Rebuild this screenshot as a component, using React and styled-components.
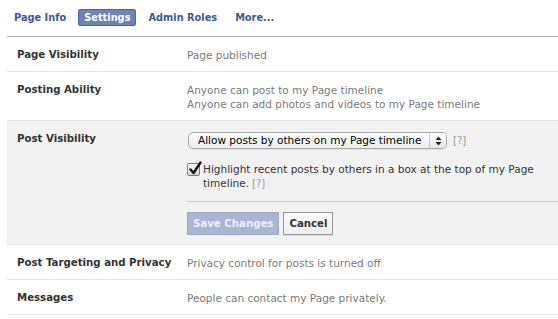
import styled, { createGlobalStyle } from "styled-components";

const GlobalStyle = createGlobalStyle`
    html, body {
        margin: 0;
        padding: 0;
        background: #fff;
    }
    body {
        font-family: "DejaVu Sans", "Liberation Sans", sans-serif;
        font-size: 10.5px;
        color: #333;
        overflow: hidden;
    }
`;

const Page = styled.div`
    width: 558px;
    height: 319px;
    overflow: hidden;
`;

const TabBar = styled.nav`
    display: flex;
    gap: 6px;
    margin-left: 7px;
    padding: 9px 0 10px 1px;
    border-bottom: 1px solid #aaa;
`;

const Tab = styled.a`
    display: block;
    height: 17px;
    line-height: 15px;
    padding: 0 5px;
    box-sizing: border-box;
    font-weight: bold;
    font-size: 9.8px;
    color: ${(p) => (p.$active ? "#fff" : "#3b5998")};
    background: ${(p) => (p.$active ? "#6d84b4" : "transparent")};
    border: 1px solid ${(p) => (p.$active ? "#4c66a0" : "transparent")};
    border-radius: 2px;
    text-decoration: none;
    cursor: pointer;
`;

const List = styled.div`
    margin-left: 7px;
`;

const Row = styled.div`
    display: grid;
    grid-template-columns: 180px 1fr;
    padding: 11px 0 9px;
    background: ${(p) => (p.$editing ? "#f2f2f2" : "transparent")};
    border-bottom: 1px solid #e5e5e5;
    line-height: 14px;
`;

const Label = styled.div`
    padding-left: 10px;
    font-weight: bold;
    font-size: 10.2px;
    color: #333;
    white-space: nowrap;
`;

const Value = styled.div`
    color: #7a7a7a;
`;

const Editor = styled.div`
    display: flex;
    flex-direction: column;
`;

const SelectLine = styled.div`
    display: flex;
    align-items: center;
    gap: 6px;
    padding-left: 1px;
`;

const Select = styled.div`
    display: flex;
    align-items: stretch;
    width: 259px;
    height: 17px;
    box-sizing: border-box;
    border: 1px solid #a8a8a8;
    border-radius: 5px;
    background: linear-gradient(#ffffff, #ececec);
    box-shadow: 0 1px 0 rgba(0, 0, 0, 0.06);
    color: #000;
    font-size: 10.5px;
    overflow: hidden;
`;

const SelectText = styled.span`
    flex: 1;
    padding-left: 9px;
    line-height: 15px;
    white-space: nowrap;
`;

const SelectArrows = styled.span`
    display: flex;
    align-items: center;
    justify-content: center;
    width: 16px;
    border-left: 1px solid #c8c8c8;
    background: linear-gradient(#ffffff, #e6e6e6);
`;

const Help = styled.span`
    color: #999;
    font-size: 10px;
    margin-left: ${(p) => (p.$inline ? "3px" : "0")};
`;

const CheckLine = styled.label`
    display: flex;
    align-items: flex-start;
    gap: 3px;
    margin-top: 13px;
    color: #333;
`;

const CheckBox = styled.span`
    position: relative;
    flex: none;
    width: 13px;
    height: 13px;
    margin-top: 1px;
    box-sizing: border-box;
    border: 1px solid #7d7d7d;
    border-radius: 2px;
    background: linear-gradient(#fdfdfd, #d6d6d6);
`;

const CheckMark = styled.svg`
    position: absolute;
    left: 0px;
    top: -3px;
`;

const Divider = styled.div`
    height: 1px;
    background: #ccc;
    margin: 10px 0 10px;
`;

const Buttons = styled.div`
    display: flex;
    gap: 4px;
`;

const Button = styled.button`
    height: 23px;
    padding: 0 5px;
    font-family: "DejaVu Sans", "Liberation Sans", sans-serif;
    font-size: 10.2px;
    font-weight: bold;
    border-radius: 0;
    cursor: pointer;
    color: ${(p) => (p.$primary ? "#eef1f7" : "#333")};
    background: ${(p) => (p.$primary ? "#a8b6d3" : "linear-gradient(#fafafa, #efefef)")};
    border: 1px solid ${(p) => (p.$primary ? "#9aa9c8" : "#999")};
    box-shadow: ${(p) => (p.$primary ? "none" : "0 1px 0 rgba(0,0,0,0.1)")};
`;

const App = () => {
    return (
        <Page>
            <GlobalStyle />
            <TabBar>
                <Tab>Page Info</Tab>
                <Tab $active>Settings</Tab>
                <Tab>Admin Roles</Tab>
                <Tab>More...</Tab>
            </TabBar>
            <List>
                <Row>
                    <Label>Page Visibility</Label>
                    <Value>Page published</Value>
                </Row>
                <Row>
                    <Label>Posting Ability</Label>
                    <Value>
                        Anyone can post to my Page timeline
                        <br />
                        Anyone can add photos and videos to my Page timeline
                    </Value>
                </Row>
                <Row $editing>
                    <Label>Post Visibility</Label>
                    <Editor>
                        <SelectLine>
                            <Select>
                                <SelectText>Allow posts by others on my Page timeline</SelectText>
                                <SelectArrows>
                                    <svg width="7" height="10" viewBox="0 0 7 10">
                                        <path d="M3.5 0.5 L6.5 4 L0.5 4 Z" fill="#222" />
                                        <path d="M3.5 9.5 L6.5 6 L0.5 6 Z" fill="#222" />
                                    </svg>
                                </SelectArrows>
                            </Select>
                            <Help>[?]</Help>
                        </SelectLine>
                        <CheckLine>
                            <CheckBox>
                                <CheckMark width="15" height="15" viewBox="0 0 15 15">
                                    <path
                                        d="M2.5 8.5 L5.5 12 L12.5 1.5"
                                        fill="none"
                                        stroke="#111"
                                        strokeWidth="2.4"
                                        strokeLinecap="round"
                                        strokeLinejoin="round"
                                    />
                                </CheckMark>
                            </CheckBox>
                            <span>
                                Highlight recent posts by others in a box at the top of my Page
                                timeline.<Help $inline>[?]</Help>
                            </span>
                        </CheckLine>
                        <Divider />
                        <Buttons>
                            <Button $primary>Save Changes</Button>
                            <Button>Cancel</Button>
                        </Buttons>
                    </Editor>
                </Row>
                <Row>
                    <Label>Post Targeting and Privacy</Label>
                    <Value>Privacy control for posts is turned off</Value>
                </Row>
                <Row>
                    <Label>Messages</Label>
                    <Value>People can contact my Page privately.</Value>
                </Row>
            </List>
        </Page>
    );
};

export default App;
